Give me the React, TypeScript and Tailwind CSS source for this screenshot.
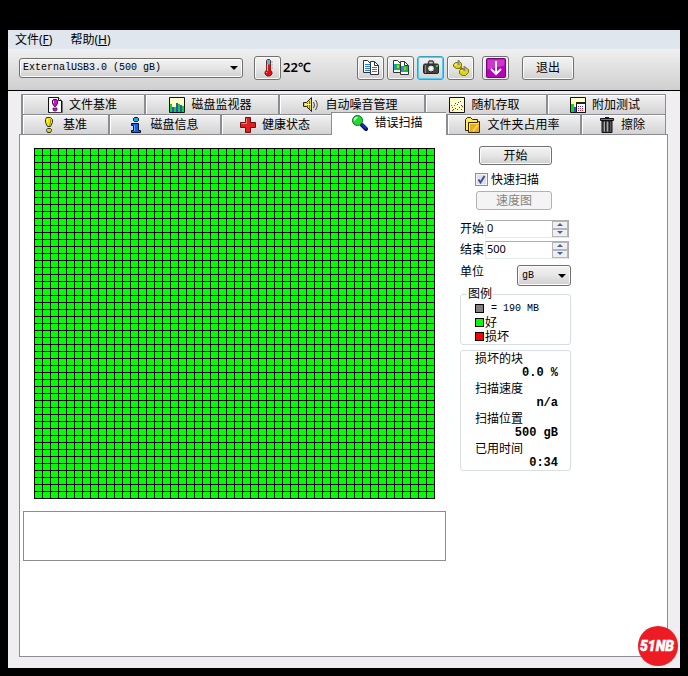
import { useState } from "react";
import type { ReactNode } from "react";

const sans = "font-['Noto_Sans','Noto_Sans_CJK_SC',sans-serif]";
const mono = "font-['Liberation_Mono','Noto_Sans_CJK_SC',monospace]";
const button =
  "rounded-[3px] border border-[#707070] bg-linear-to-b from-[#f3f3f3] via-[#e6e6e6] to-[#cfcfcf] shadow-[inset_0_0_0_1px_#fbfbfb]";

function Icon({ children, size = 16 }: { children: ReactNode; size?: number }) {
  return (
    <svg width={size} height={size} viewBox={`0 0 ${size} ${size}`} className="shrink-0" aria-hidden="true">
      {children}
    </svg>
  );
}

function Arrow() {
  return (
    <svg width="8" height="4" viewBox="0 0 8 4" className="pointer-events-none absolute top-1/2 right-1 -mt-0.5" aria-hidden="true">
      <path d="M0 0h8L4 4z" fill="#000" />
    </svg>
  );
}

const icons = {
  fileBenchmark: (
    <Icon>
      <path d="M1.5.5h10l3 3v12h-13z" fill="#fff8fc" stroke="#111" />
      <path d="M11.5.5v3h3" fill="#fff" stroke="#111" />
      <path d="M15.5 4v12H3" fill="none" stroke="#777" />
      <path d="M6.500 2.500h3l1 1v3l-2 3h-1l-2-3v-3z" fill="#d010d0" stroke="#400040" />
      <path d="M6.500 4v2" stroke="#fff" />
      <path d="M6 11h4v2l-1 1H7l-1-1z" fill="#d010d0" stroke="#222" strokeWidth=".7" />
    </Icon>
  ),
  monitor: (
    <Icon>
      <path d="M.5.5h15v15H.5z" fill="#fffdc8" stroke="#111" />
      <path d="M1 7h2v8H1zM4 10h3v5H4zM9 7h2v8H9zM13 9h2v6h-2z" fill="#10d810" />
      <path d="M3 10h2v5H3zM7 6h2v9H7zM11 8h2v7h-2z" fill="#3048e8" />
    </Icon>
  ),
  speaker: (
    <Icon>
      <path d="M.5 5.500h3l5-5v14l-5-5h-3z" fill="#f5dc10" stroke="#222" />
      <path d="M4.500 6v4M6.500 4v8" stroke="#8a7600" />
      <path d="M2 7.500h6" stroke="#fffbb0" />
      <path d="M10.500 5q2 3 0 6M12.500 3q3.500 4.500 0 10" fill="none" stroke="#444" />
    </Icon>
  ),
  random: (
    <Icon>
      <path d="M.5.5h15v15H.5z" fill="#fffdc8" stroke="#111" />
      <path d="M2 8h1v1H2zM5 8h1v1H5zM8 7h1v1H8zM11 4h1v1h-1zM6 11h1v1H6zM10 10h1v1h-1zM13 9h1v1h-1zM3 13h1v1H3z" fill="#e02020" />
      <path d="M3 10h1v1H3zM6 6h1v1H6zM9 5h1v1H9zM4 12h1v1H4zM8 12h1v1H8zM12 8h1v1h-1zM12 12h1v1h-1z" fill="#2440e0" />
    </Icon>
  ),
  extra: (
    <Icon>
      <path d="M.5.5h15v15H.5z" fill="#fffdc8" stroke="#111" />
      <path d="M1 7h3v8H1z" fill="#10d810" />
      <path d="M4 10h2v5H4z" fill="#3048e8" />
      <path d="M6.500 6.500h9v9h-9z" fill="#fff" stroke="#111" />
      <path d="M6 5h10v2H6z" fill="#222" />
      <path d="M8 9h1v1H8zM10 9h1v1h-1zM12 9h1v1h-1zM8 13h1v1H8z" fill="#2440e0" />
      <path d="M8 11h1v1H8zM10 11h1v1h-1zM12 11h1v1h-1zM10 13h1v1h-1zM12 13h1v1h-1z" fill="#e02020" />
    </Icon>
  ),
  benchmark: (
    <Icon>
      <path d="M5.500.5h4l2 2v3l-2 4h-3l-2-4v-3z" fill="#f0e010" stroke="#333" />
      <path d="M9.500 2v4l-1 3" fill="none" stroke="#a09000" />
      <path d="M6.500 2v3" stroke="#fff" />
      <path d="M6.500 11.500h3l1 1v1l-1 2h-3l-1-2v-1z" fill="#e0d010" stroke="#333" />
    </Icon>
  ),
  info: (
    <Icon>
      <path d="M6.500.5h3l1 1v2l-1 1h-3l-1-1v-2z" fill="#18a8e8" stroke="#012" />
      <path d="M3.500 6.500h7v7h2v2h-9v-2h2v-5h-2z" fill="#1060ff" stroke="#012" />
      <path d="M6.500 8v6" stroke="#50b0ff" />
    </Icon>
  ),
  health: (
    <Icon>
      <path d="M5.500.5h5v5h5v5h-5v5h-5v-5h-5v-5h5z" fill="#e02020" stroke="#6c1010" />
      <path d="M6.500 6.500v-5M1.500 6.500h5" stroke="#ff7b7b" />
    </Icon>
  ),
  magnifier: (
    <Icon>
      <path d="M10 10l4 4" stroke="#001060" strokeWidth="4" strokeLinecap="round" />
      <path d="M10 9.500l4 4" stroke="#1530e0" strokeWidth="2" />
      <circle cx="5.500" cy="5.500" r="5" fill="#20d838" stroke="#067010" />
      <path d="M2.500 5.500q0-3 3-3" fill="none" stroke="#d0ffd4" strokeWidth="1.500" />
    </Icon>
  ),
  folder: (
    <Icon>
      <path d="M.5 13.500v-11l2-2h3l2 2h5v11z" fill="#ffe95e" stroke="#332600" />
      <path d="M3.500 15.500v-10h9l1-1h1v11z" fill="#e8b018" stroke="#332600" />
      <path d="M4.500 14v-7.500h9" fill="none" stroke="#ffe880" />
      <path d="M8 14l5-6" stroke="#f8d050" strokeWidth="2" />
    </Icon>
  ),
  trash: (
    <Icon>
      <path d="M6 .5h4" stroke="#111" />
      <path d="M1.500 1.500h13v2h-13z" fill="#777" stroke="#111" />
      <path d="M3 4h10v11.500H3z" fill="#555" stroke="#111" />
      <path d="M5.500 4.500v10M8.500 4.500v10" stroke="#aaa" />
      <path d="M6.500 4.500v10M10.500 4.500v10" stroke="#222" />
    </Icon>
  ),
  thermometer: (
    <Icon size={18}>
      <path d="M7.500 11V1.500l1-1h2l1 1V11l1.500 2v2l-2 2h-3l-2-2v-2z" fill="#e01010" stroke="#5a1010" strokeWidth=".8" />
      <path d="M8 1h3v4.500H8z" fill="#30c8e0" />
      <path d="M8.500 5v7M7.500 13v1" stroke="#ffaaaa" />
      <path d="M12 3h2M12 6h2M12 9h2" stroke="#aaa" />
    </Icon>
  ),
  copy: (
    <Icon size={18}>
      <path d="M1.500 1.500h4l3 3v9h-7z" fill="#fff" stroke="#333" />
      <path d="M3 5.500h5M3 7.500h5M3 9.500h5M3 11.500h5" stroke="#2080f0" />
      <path d="M8.500 2.500h4l4 4v9h-8z" fill="#fff" stroke="#333" />
      <path d="M12.500 2.500v4h4" fill="none" stroke="#333" />
      <path d="M10 8.500h5M10 10.500h5M10 12.500h5" stroke="#2080f0" />
    </Icon>
  ),
  copyImage: (
    <Icon size={18}>
      <path d="M1.500 1.500h4l3 3v9h-7z" fill="#fff" stroke="#333" />
      <path d="M2 5h6v6H2z" fill="#10c030" />
      <path d="M2 5h2v6H2z" fill="#2090e8" />
      <path d="M5 6h2v3H5z" fill="#d0c020" />
      <path d="M8.500 2.500h4l4 4v9h-8z" fill="#fff" stroke="#333" />
      <path d="M12.500 2.500v4h4" fill="none" stroke="#333" />
      <path d="M9 7h7v6H9z" fill="#10c030" />
      <path d="M9 7h2v5H9z" fill="#2090e8" />
      <path d="M12 8h2v3h-2z" fill="#e0a020" />
    </Icon>
  ),
  camera: (
    <Icon size={18}>
      <path d="M6.500 5V3l1-1h3l1 1v2" fill="#ccc" stroke="#444" strokeWidth="1.400" />
      <rect x="1.500" y="5" width="15" height="9.500" rx="1.500" fill="#444" stroke="#222" />
      <path d="M3 6h1v8H3z" fill="#888" />
      <circle cx="9" cy="9.500" r="3.500" fill="#ddd" stroke="#222" />
      <circle cx="9" cy="9.500" r="1.500" fill="#fff" />
      <path d="M14 6h2v2h-2z" fill="#20dd40" />
    </Icon>
  ),
  plugs: (
    <Icon size={18}>
      <path d="M1.500 5.500l2-2h2l2-1 2 2v3l-2 2h-3l-3-2z" fill="#e0d414" stroke="#777000" />
      <path d="M7.500 11.500l2-2h2l2-1 3 2v3l-3 3h-3l-3-2z" fill="#e0d414" stroke="#777000" />
      <path d="M6.500 1v5M12.500 7v5" stroke="#888" strokeWidth="2" />
      <path d="M8 8l3 3" stroke="#807800" strokeWidth="2" />
      <path d="M3 6l2-1M9 12l2-1" stroke="#fff8a0" />
    </Icon>
  ),
  download: (
    <Icon size={20}>
      <rect x=".5" y=".5" width="19" height="19" rx="1" fill="#b800b8" stroke="#780078" />
      <path d="M1.500 1.500h17v6l-17 4z" fill="#e070e0" opacity=".5" />
      <path d="M10 3v12M5 11l5 5 5-5" fill="none" stroke="#fff" strokeWidth="2" />
    </Icon>
  ),
};

const backTabs = [
  { label: "文件基准", icon: icons.fileBenchmark },
  { label: "磁盘监视器", icon: icons.monitor },
  { label: "自动噪音管理", icon: icons.speaker },
  { label: "随机存取", icon: icons.random },
  { label: "附加测试", icon: icons.extra },
];

const frontTabs = [
  { label: "基准", icon: icons.benchmark },
  { label: "磁盘信息", icon: icons.info },
  { label: "健康状态", icon: icons.health },
  { label: "错误扫描", icon: icons.magnifier, active: true },
  { label: "文件夹占用率", icon: icons.folder },
  { label: "擦除", icon: icons.trash },
];

const tools = [
  { label: "复制文本", icon: icons.copy },
  { label: "复制图像", icon: icons.copyImage },
  { label: "截图", icon: icons.camera, focused: true },
  { label: "选项", icon: icons.plugs },
];

const legend = [
  { color: "bg-[#808080]", text: " = 190 MB", latin: true },
  { color: "bg-[#00ff00]", text: "好" },
  { color: "bg-[#ff0000]", text: "损坏" },
];

const stats = [
  { label: "损坏的块", value: "0.0 %" },
  { label: "扫描速度", value: "n/a" },
  { label: "扫描位置", value: "500 gB" },
  { label: "已用时间", value: "0:34" },
];

function Tab({ label, icon, active }: { label: string; icon: ReactNode; active?: boolean }) {
  return (
    <button
      role="tab"
      aria-selected={!!active}
      className={
        active
          ? "z-10 -mt-0.5 -mb-px flex items-center justify-center gap-1.5 border-t border-l border-[#8c8c94] bg-white pr-[3px] pb-0.5 whitespace-nowrap"
          : "flex items-center justify-center gap-1.5 border-t border-l-2 border-[#8c8c94] bg-linear-to-b from-[#f2f2f2] to-[#d3d3d3] pt-px pr-[3px] whitespace-nowrap shadow-[inset_1px_1px_0_#fff]"
      }
    >
      {icon}
      {label}
    </button>
  );
}

function SpinField({ id, label, initial }: { id: string; label: string; initial: number }) {
  const [value, setValue] = useState(initial);
  return (
    <div className="flex h-[21px] items-center">
      <label htmlFor={id} className="w-[25px] shrink-0">{label}</label>
      <div className="flex h-[18px] w-[84px] border border-[#e3e9ef] border-t-[#abadb3] border-r-[#abadb3] bg-white">
        <input
          id={id}
          value={value}
          onChange={(e) => setValue(Number(e.target.value) || 0)}
          className="w-0 flex-1 px-px text-[11px] outline-none"
        />
        <div className="flex w-4 flex-col">
          <button aria-label={`${label} +`} onClick={() => setValue(value + 1)} className="flex flex-1 items-center justify-center border border-[#b5b5b5] bg-[#f0f0f0]">
            <svg width="6" height="3" viewBox="0 0 6 3"><path d="M0 3h6L3 0z" fill="#4560b0" /></svg>
          </button>
          <button aria-label={`${label} -`} onClick={() => setValue(value - 1)} className="flex flex-1 items-center justify-center border border-[#b5b5b5] bg-[#f0f0f0]">
            <svg width="6" height="3" viewBox="0 0 6 3"><path d="M0 0h6L3 3z" fill="#4560b0" /></svg>
          </button>
        </div>
      </div>
    </div>
  );
}

function ScanMap() {
  return (
    <svg width="401" height="351" className="ml-[11px] block" role="img" aria-label="错误扫描">
      <defs>
        <pattern id="block" width="8" height="7" patternUnits="userSpaceOnUse">
          <path d="M0 0h8v7H0z" fill="#000" />
          <path d="M1 1h7v6H1z" fill="#00ff00" />
        </pattern>
      </defs>
      <rect width="401" height="351" fill="url(#block)" shapeRendering="crispEdges" />
    </svg>
  );
}

function ScanControls() {
  return (
    <div className="flex w-[111px] shrink-0 flex-col pt-[11px]">
      <button className={`ml-[19px] h-[19px] w-[73px] ${button}`}>开始</button>
      <label className="mt-2 ml-[15px] flex h-[13px] items-center gap-[3px]">
        <span className="relative flex">
          <input type="checkbox" defaultChecked className="peer size-[13px] appearance-none border border-[#8e8f8f] bg-[#dde1e6] shadow-[inset_0_0_0_1px_#f4f4f4]" />
          <svg viewBox="0 0 13 13" className="pointer-events-none absolute inset-0 hidden size-[13px] peer-checked:block">
            <path d="M3.500 6.500l2 3 4-6.500" fill="none" stroke="#3c50a0" strokeWidth="2" />
          </svg>
        </span>
        快速扫描
      </label>
      <button disabled className="mt-[5px] ml-4 h-[19px] w-[76px] rounded-[3px] border border-[#adb2b5] bg-[#f4f4f4] text-[#838383]">速度图</button>

      <div className="mt-2">
        <SpinField id="start" label="开始" initial={0} />
        <SpinField id="end" label="结束" initial={500} />
      </div>
      <div className="mt-1 flex h-[22px] items-end justify-between">
        <label htmlFor="unit" className="self-start leading-4">单位</label>
        <div className={`relative h-[21px] w-[54px] ${button}`}>
          <select id="unit" className={`block size-full appearance-none pl-1 text-[10px] outline-none ${mono}`}>
            <option>gB</option>
          </select>
          <Arrow />
        </div>
      </div>

      <fieldset className="h-[59px] rounded-[3px] border border-[#d5dfe5] pl-3.5">
        <legend className="-ml-2 h-4 px-px leading-4">图例</legend>
        <ul className="-mt-px">
          {legend.map((item) => (
            <li key={item.text} className="flex h-3.5 items-center gap-px leading-[13px]">
              <span className={`size-[9px] border border-black ${item.color}`} />
              <span className={item.latin ? `text-[10px] whitespace-pre ${mono}` : ""}>{item.text}</span>
            </li>
          ))}
        </ul>
      </fieldset>

      <dl className="mt-[5px] h-[121px] rounded-[3px] border border-[#d5dfe5] pr-3 pl-3.5">
        {stats.map((s) => (
          <div key={s.label} className="h-[30px]">
            <dt className="h-[15px] leading-[15px]">{s.label}</dt>
            <dd className={`h-[15px] text-right text-xs leading-[15px] font-bold ${mono}`}>{s.value}</dd>
          </div>
        ))}
      </dl>
    </div>
  );
}

export default function App() {
  return (
    <div className={`flex min-h-screen flex-col bg-black px-2 pt-[30px] pb-2 text-xs text-black ${sans}`}>
      <div className="relative flex flex-1 flex-col bg-[#efefef]">
        <nav className="flex h-[19px] items-center gap-[18px] bg-[#dfe6ee] pl-[7px]">
          <button>文件(<u>F</u>)</button>
          <button>帮助(<u>H</u>)</button>
        </nav>

        <header className="flex h-[42px] items-center border-b border-black bg-linear-to-b from-[#f0f0f0] to-[#cfcfcf] pb-1 pl-[11px]">
          <div className={`relative h-5 w-56 ${button}`}>
            <select aria-label="磁盘" className={`block size-full appearance-none pl-[3px] text-[10px] outline-none ${mono}`}>
              <option>ExternalUSB3.0 (500 gB)</option>
            </select>
            <Arrow />
          </div>
          <button aria-label="温度" className={`ml-[11px] flex h-6 w-[27px] items-center justify-center ${button}`}>{icons.thermometer}</button>
          <span className="ml-0.5 w-[74px] text-[13px] font-semibold">22℃</span>
          <div className="flex gap-[3px]">
            {tools.map((t) => (
              <button
                key={t.label}
                aria-label={t.label}
                className={
                  t.focused
                    ? "flex h-6 w-[27px] items-center justify-center rounded-[3px] border border-[#3c9fc8] bg-linear-to-b from-[#f3f3f3] to-[#d3d3d3] shadow-[inset_0_0_0_1px_#48d0f8]"
                    : `flex h-6 w-[27px] items-center justify-center ${button}`
                }
              >
                {t.icon}
              </button>
            ))}
          </div>
          <button aria-label="最小化到托盘" className={`ml-2 flex h-6 w-[27px] items-center justify-center ${button}`}>{icons.download}</button>
          <button className={`ml-[13px] h-6 w-[52px] ${button}`}>退出</button>
        </header>

        <main className="flex flex-1 flex-col bg-[#f0eef0] pt-[3px] pr-3 pb-[11px] pl-[11px]">
          <div role="tablist" className="mr-0.5 ml-0.5">
            <div className="grid h-5 grid-cols-[123fr_134fr_146fr_122fr_119fr] border-r border-[#8c8c94]">
              {backTabs.map((tab) => <Tab key={tab.label} {...tab} />)}
            </div>
            <div className="grid h-5 grid-cols-[87fr_112fr_111fr_115fr_134fr_85fr] border-r border-[#8c8c94]">
              {frontTabs.map((tab) => <Tab key={tab.label} {...tab} />)}
            </div>
          </div>

          <section className="flex flex-1 items-start gap-3.5 border border-[#8c8c94] bg-white pl-[3px]">
            <div className="w-[423px] shrink-0 pt-[13px]">
              <ScanMap />
              <div className="mt-3 h-[50px] border border-[#8c8c94]" />
            </div>
            <ScanControls />
          </section>
        </main>

        <svg width="42" height="42" viewBox="0 0 42 42" className="absolute right-px bottom-px" role="img" aria-label="51NB">
          <circle cx="21" cy="21" r="20" fill="#ed1c24" />
          <text x="20" y="26" textAnchor="middle" fill="#fff" stroke="#fff" strokeWidth=".5" className="font-['Roboto',sans-serif] text-sm font-black italic">51NB</text>
        </svg>
      </div>
    </div>
  );
}
